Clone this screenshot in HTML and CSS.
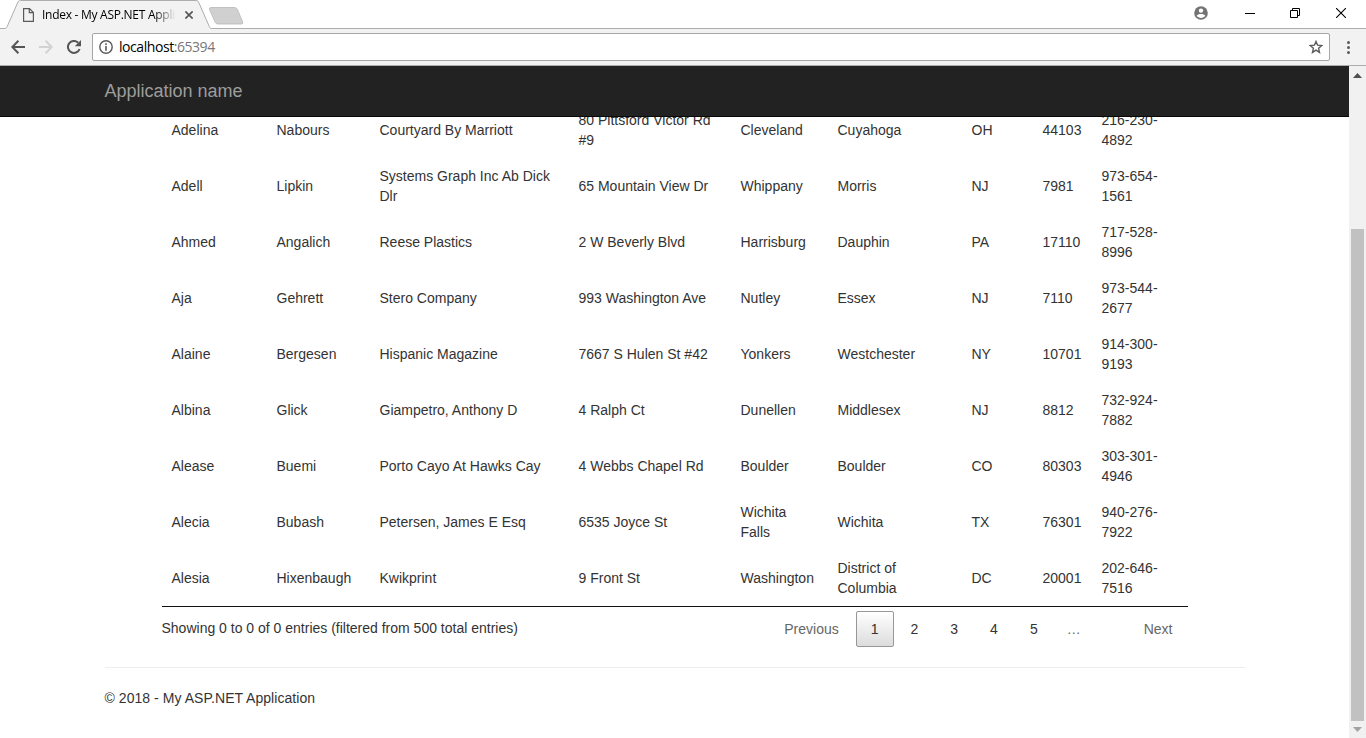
FILE: index.html
```html
<!DOCTYPE html>
<html lang="en">
<head>
<meta charset="utf-8">
<title>Index - My ASP.NET Application</title>
<link rel="stylesheet" href="styles.css">
</head>
<body>
<header class="titlebar">
  <svg class="tab-shapes" width="260" height="29" viewBox="0 0 260 29">
    <path d="M0 28.500H4.500C6 28.500 6.500 28 7.200 26.500L17.500 3C18.200 1.200 19 .5 20.500 .5H196C197.500 .5 198.300 1.200 199 3L209.300 26.500C210 28 210.500 28.500 212 28.500H260V29.500H0Z" fill="#f2f2f2" stroke="#adadad"/>
    <path d="M211 7.500H234.500Q236.500 7.500 237.300 9.200L242.500 21.500Q243.500 24 241.500 24H218Q216 24 215.200 22.300L209.500 9.500Q208.800 7.500 211 7.500Z" fill="#d0d0d0" stroke="#b8b8b8" stroke-width=".8"/>
  </svg>
  <div class="tab">
    <svg width="11" height="14" viewBox="0 0 11 14" fill="none" stroke="#5a5a5a" stroke-width="1.200"><path d="M.6 .6H6.500L10.400 4.500V13.400H.6ZM6.300 .6V4.700H10.400"/></svg>
    <span class="tab-title">Index - My ASP.NET Appli</span>
    <svg class="tab-close" width="8" height="8" viewBox="0 0 8 8" stroke="#555" stroke-width="1.600"><path d="M.4 .4L7.600 7.600M7.600 .4L.4 7.600"/></svg>
  </div>
  <div class="window-buttons">
    <svg width="14" height="14" viewBox="0 0 14 14"><circle cx="7" cy="7" r="6.800" fill="#737373"/><circle cx="7" cy="4.600" r="2.200" fill="#fff"/><path d="M2.700 9.800C3.800 7.400 10.200 7.400 11.300 9.800C9.500 12.600 4.500 12.600 2.700 9.800Z" fill="#fff"/></svg>
    <svg width="10" height="10" viewBox="0 0 10 10"><path d="M0 5.500H10" stroke="#000"/></svg>
    <svg width="10" height="10" viewBox="0 0 10 10" fill="none" stroke="#000"><path d="M.5 2.500H7.500V9.500H.5ZM2.500 2.500V.5H9.500V7.500H7.500"/></svg>
    <svg width="10" height="10" viewBox="0 0 10 10" stroke="#000" stroke-width="1.100"><path d="M0 0L10 10M10 0L0 10"/></svg>
  </div>
</header>
<div class="toolbar">
  <svg width="14" height="14" viewBox="0 0 14 14" fill="none" stroke="#555" stroke-width="2"><path d="M14 7H1.500M7.400 .8L1.300 7L7.400 13.200"/></svg>
  <svg width="14" height="14" viewBox="0 0 14 14" fill="none" stroke="#d2d2d2" stroke-width="2"><path d="M0 7H12.500M6.600 .8L12.700 7L6.600 13.200"/></svg>
  <svg width="14" height="14" viewBox="0 0 14 14"><path d="M12.600 9A6 6 0 1 1 11.200 2.700" fill="none" stroke="#555" stroke-width="2"/><path d="M14 0V6.200H7.800Z" fill="#555"/></svg>
  <div class="address">
    <svg width="14" height="14" viewBox="0 0 14 14"><circle cx="7" cy="7" r="6.200" fill="none" stroke="#5a5a5a" stroke-width="1.400"/><path d="M6.200 3.300H7.800V4.900H6.200ZM6.200 6.100H7.800V10.800H6.200Z" fill="#5a5a5a"/></svg>
    <span class="url">localhost<span class="port">:65394</span></span>
    <svg class="star" width="14" height="14" viewBox="0 0 14 14"><path d="M7 1.500L8.600 5.200L12.800 5.600L9.600 8.300L10.500 12.400L7 10.200L3.500 12.400L4.400 8.300L1.200 5.600L5.400 5.200Z" fill="none" stroke="#5a5a5a" stroke-width="1.400"/></svg>
  </div>
  <svg class="menu" width="4" height="14" viewBox="0 0 4 14" fill="#5a5a5a"><circle cx="2.500" cy="2.500" r="1.500"/><circle cx="2.500" cy="7.500" r="1.500"/><circle cx="2.500" cy="12.400" r="1.500"/></svg>
</div>
<div class="viewport">
  <div class="page">
    <nav class="navbar"><div class="container">Application name</div></nav>
    <main class="container">
      <div class="data">
        <table>
          <colgroup><col class="c1"><col class="c2"><col class="c3"><col class="c4"><col class="c5"><col class="c6"><col class="c7"><col class="c8"><col class="c9"></colgroup>
          <tbody>
            <tr><td>Adelina<td>Nabours<td>Courtyard By Marriott<td>80 Pittsford Victor Rd #9<td>Cleveland<td>Cuyahoga<td>OH<td>44103<td>216-230-4892</tr>
            <tr><td>Adell<td>Lipkin<td>Systems Graph Inc Ab Dick Dlr<td>65 Mountain View Dr<td>Whippany<td>Morris<td>NJ<td>7981<td>973-654-1561</tr>
            <tr><td>Ahmed<td>Angalich<td>Reese Plastics<td>2 W Beverly Blvd<td>Harrisburg<td>Dauphin<td>PA<td>17110<td>717-528-8996</tr>
            <tr><td>Aja<td>Gehrett<td>Stero Company<td>993 Washington Ave<td>Nutley<td>Essex<td>NJ<td>7110<td>973-544-2677</tr>
            <tr><td>Alaine<td>Bergesen<td>Hispanic Magazine<td>7667 S Hulen St #42<td>Yonkers<td>Westchester<td>NY<td>10701<td>914-300-9193</tr>
            <tr><td>Albina<td>Glick<td>Giampetro, Anthony D<td>4 Ralph Ct<td>Dunellen<td>Middlesex<td>NJ<td>8812<td>732-924-7882</tr>
            <tr><td>Alease<td>Buemi<td>Porto Cayo At Hawks Cay<td>4 Webbs Chapel Rd<td>Boulder<td>Boulder<td>CO<td>80303<td>303-301-4946</tr>
            <tr><td>Alecia<td>Bubash<td>Petersen, James E Esq<td>6535 Joyce St<td>Wichita Falls<td>Wichita<td>TX<td>76301<td>940-276-7922</tr>
            <tr><td>Alesia<td>Hixenbaugh<td>Kwikprint<td>9 Front St<td>Washington<td>District of Columbia<td>DC<td>20001<td>202-646-7516</tr>
          </tbody>
        </table>
        <div class="table-foot">
          <div class="info">Showing 0 to 0 of 0 entries (filtered from 500 total entries)</div>
          <div class="pages">
            <a class="btn muted">Previous</a><a class="btn current">1</a><a class="btn">2</a><a class="btn">3</a><a class="btn">4</a><a class="btn">5</a><span class="ellipsis">…</span><a class="btn muted next">Next</a>
          </div>
        </div>
      </div>
      <hr>
      <footer>© 2018 - My ASP.NET Application</footer>
    </main>
  </div>
  <div class="scrollbar">
    <svg width="9" height="5" viewBox="0 0 9 5"><path d="M0 5L4.500 0L9 5Z" fill="#505050"/></svg>
    <div class="thumb"></div>
    <svg width="9" height="5" viewBox="0 0 9 5"><path d="M0 0L4.500 5L9 0Z" fill="#a3a3a3"/></svg>
  </div>
</div>
</body>
</html>
```
FILE: styles.css
```css
* { box-sizing: border-box; }
body { margin: 0; height: 738px; overflow: hidden; display: flex; flex-direction: column; background: #fff; color: #333; font: 14px/20px "Liberation Sans", Arial, sans-serif; }
svg { display: block; flex: none; }

/* Browser window */
.titlebar { position: relative; flex: none; height: 29px; display: flex; justify-content: space-between; border-bottom: 1px solid #adadad; }
.tab-shapes { position: absolute; left: 0; top: 0; }
.tab { position: relative; display: flex; align-items: center; height: 29px; padding-left: 23px; }
.tab-title { width: 137px; margin-left: 8px; white-space: nowrap; font: 12px/18px "Open Sans", sans-serif; letter-spacing: -.27px; color: #000; -webkit-mask-image: linear-gradient(to right, #000 112px, transparent 134px); mask-image: linear-gradient(to right, #000 112px, transparent 134px); }
.tab-close { margin-left: 6px; }
.window-buttons { display: flex; align-items: center; gap: 36px; height: 26px; padding-right: 20px; }
.window-buttons svg:first-child { margin-right: 1px; }
.window-buttons svg:nth-child(2) { margin-right: -1px; }
.toolbar { flex: none; height: 37px; display: flex; align-items: center; padding: 0 16px 0 11px; background: #f2f2f2; border-bottom: 1px solid #adadad; }
.toolbar > svg + svg { margin-left: 14px; }
.address { flex: 1; display: flex; align-items: center; height: 28px; margin-left: 11px; padding: 0 6px; background: #fff; border: 1px solid #a6a6a6; border-radius: 2px; }
.url { margin-left: 6px; font: 14px/20px "Open Sans", sans-serif; letter-spacing: -.44px; color: #000; }
.port { color: #777; }
.star { margin-left: auto; }
.menu { margin-left: 16px; }

/* Page */
.viewport { flex: 1; display: flex; min-height: 0; }
.page { flex: 1; overflow: hidden; }
.navbar { position: relative; z-index: 1; height: 51px; background: #222; border-bottom: 1px solid #080808; color: #9d9d9d; font-size: 18px; line-height: 50px; }
.container { width: 1170px; margin: 0 auto; padding: 0 15px; }
.data { width: 1026px; margin: -15px auto 0; }
table { width: 1026px; table-layout: fixed; border-collapse: separate; border-spacing: 0; border-bottom: 1px solid #111; }
td { padding: 8px 10px; vertical-align: middle; }
.c1 { width: 105px; }
.c2 { width: 103px; }
.c3 { width: 199px; }
.c4 { width: 162px; }
.c5 { width: 97px; }
.c6 { width: 134px; }
.c7 { width: 71px; }
.c8 { width: 59px; }
.c9 { width: 96px; }
.table-foot { display: flex; justify-content: space-between; height: 40px; }
.info { padding-top: 11px; }
.pages { display: flex; padding-top: 4px; }
.btn { height: 36px; min-width: 37.8px; margin-left: 2px; padding: 7px 14px; border: 1px solid transparent; border-radius: 2px; text-align: center; }
.muted { color: #666; }
.current { border-color: #979797; background: linear-gradient(to bottom, #fff 0%, #dcdcdc 100%); }
.ellipsis { padding: 8px 14px; color: #666; }
.next { margin-left: 34px; }
hr { height: 1px; margin: 20px 0; border: 0; background: #eee; }
footer { letter-spacing: .05px; }

.scrollbar { width: 17px; display: flex; flex-direction: column; align-items: center; padding: 7px 0 6px; background: #f1f1f1; }
.thumb { flex: none; width: 13px; height: 492px; margin: 151px 0 6px; background: #c1c1c1; }
```
